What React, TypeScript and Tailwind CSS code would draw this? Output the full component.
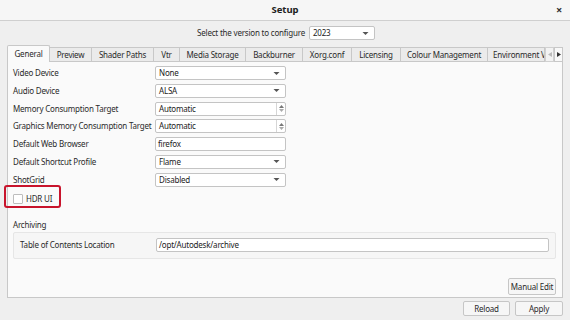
import React from "react";

const Arrow = () => (
  <svg width="7" height="5" viewBox="0 0 7 5" className="shrink-0">
    <path d="M0.5 1 L6.5 1 L3.5 4 Z" fill="#555" />
  </svg>
);

const Combo = ({ value, w = "w-[131px]" }: { value: string; w?: string }) => (
  <div className={`${w} h-[14px] flex items-center justify-between pl-[3px] pr-[5px] bg-white border border-[#c4c4c4] rounded-[2px] text-[#222]`}>
    <span>{value}</span>
    <Arrow />
  </div>
);

const Spin = ({ value }: { value: string }) => (
  <div className="w-[131px] h-[14px] flex items-stretch bg-white border border-[#c4c4c4] rounded-[2px] text-[#222]">
    <span className="flex-1 pl-[3px] flex items-center">{value}</span>
    <div className="w-[9px] border-l border-[#d6d6d6] flex flex-col items-center justify-center gap-[1px]">
      <svg width="5" height="3" viewBox="0 0 5 3"><path d="M0 3 L5 3 L2.5 0 Z" fill="#777" /></svg>
      <svg width="5" height="3" viewBox="0 0 5 3"><path d="M0 0 L5 0 L2.5 3 Z" fill="#aaa" /></svg>
    </div>
  </div>
);

const Edit = ({ value, w = "w-[131px]" }: { value: string; w?: string }) => (
  <div className={`${w} h-[14px] flex items-center pl-[2px] bg-white border border-[#c4c4c4] rounded-[2px] text-[#222]`}>
    {value}
  </div>
);

const tabs: [string, string][] = [
  ["General", "w-[43px]"],
  ["Preview", "w-[42px]"],
  ["Shader Paths", "w-[62px]"],
  ["Vtr", "w-[26px]"],
  ["Media Storage", "w-[66px]"],
  ["Backburner", "w-[57px]"],
  ["Xorg.conf", "w-[49px]"],
  ["Licensing", "w-[49px]"],
  ["Colour Management", "w-[87px]"],
];

export default function App() {
  const rows: [string, React.ReactNode][] = [
    ["Video Device", <Combo value="None" />],
    ["Audio Device", <Combo value="ALSA" />],
    ["Memory Consumption Target", <Spin value="Automatic" />],
    ["Graphics Memory Consumption Target", <Spin value="Automatic" />],
    ["Default Web Browser", <Edit value="firefox" />],
    ["Default Shortcut Profile", <Combo value="Flame" />],
    ["ShotGrid", <Combo value="Disabled" />],
  ];
  return (
    <div className="w-[570px] h-[320px] bg-[#efefef] flex flex-col text-[8px] tracking-[-0.2px] text-[#2a2a2a] leading-none relative overflow-hidden whitespace-nowrap" style={{ fontFamily: "'Noto Sans', 'Open Sans', sans-serif" }}>
      {/* title bar */}
      <div className="h-[21px] bg-[#f6f6f6] border-b border-[#cfcfcf] flex items-center justify-center relative shrink-0">
        <span className="font-bold text-[9.5px] tracking-normal text-[#222]">Setup</span>
        <span className="absolute right-[8px] top-[4px] text-[11px] font-bold text-[#333]">×</span>
      </div>
      {/* version row */}
      <div className="h-[24px] flex items-center justify-center gap-[4px] shrink-0 pl-[2px]">
        <span>Select the version to configure</span>
        <Combo value="2023" w="w-[66px]" />
      </div>
      {/* tabs */}
      <div className="h-[17px] flex items-end px-[7px] shrink-0 relative z-10">
        {tabs.map(([t, w], i) =>
          i === 0 ? (
            <div key={t} className={`${w} h-[17px] bg-[#fafafa] border border-b-0 border-[#c8c8c8] rounded-t-[2px] flex items-center justify-center`}>{t}</div>
          ) : (
            <div key={t} className={`${w} h-[15px] bg-[#ebebeb] border border-l-0 border-[#c8c8c8] flex items-center justify-center`}>{t}</div>
          )
        )}
        <div className="w-[57px] h-[15px] bg-[#ebebeb] border border-l-0 border-[#c8c8c8] flex items-center pl-[5px] overflow-hidden">Environment V</div>
        <div className="w-[9px] h-[15px] bg-[#f3f3f3] border border-[#d0d0d0] flex items-center justify-center">
          <svg width="4" height="5" viewBox="0 0 4 5"><path d="M4 0 L4 5 L0 2.5 Z" fill="#bbb" /></svg>
        </div>
        <div className="w-[9px] h-[15px] bg-[#f8f8f8] border border-[#c8c8c8] flex items-center justify-center">
          <svg width="4" height="5" viewBox="0 0 4 5"><path d="M0 0 L0 5 L4 2.5 Z" fill="#333" /></svg>
        </div>
      </div>
      {/* pane */}
      <div className="mx-[7px] h-[237px] -mt-px bg-[#fafafa] border border-[#c8c8c8] flex flex-col pl-[5px] pr-[6px] pt-[4px] shrink-0">
        <div className="flex flex-col gap-[3.8px]">
          {rows.map(([l, c]) => (
            <div key={l} className="flex items-center">
              <span className="w-[142px]">{l}</span>
              {c}
            </div>
          ))}
        </div>
        <div className="mt-[7px] h-[10px] flex items-center gap-[3px]">
          <div className="w-[10px] h-[10px] bg-white border border-[#bdbdbd] rounded-[1px]" />
          <span>HDR UI</span>
        </div>
        <div className="mt-[17px]">Archiving</div>
        <div className="mt-[3px] h-[27px] bg-[#f6f6f6] border border-[#e6e6e6] rounded-[2px] flex items-center pl-[6px] pr-[6px]">
          <span className="w-[136px]">Table of Contents Location</span>
          <Edit value="/opt/Autodesk/archive" w="flex-1" />
        </div>
        <div className="flex-1" />
        <div className="flex justify-end mb-[2px]">
          <div className="w-[48px] h-[17px] bg-[#f6f6f6] border border-[#c6c6c6] rounded-[2px] flex items-center justify-center">Manual Edit</div>
        </div>
      </div>
      {/* bottom buttons */}
      <div className="flex justify-end gap-[5px] pr-[7px] pt-[3px]">
        <div className="w-[47px] h-[15px] bg-[#f6f6f6] border border-[#c6c6c6] rounded-[2px] flex items-center justify-center">Reload</div>
        <div className="w-[48px] h-[15px] bg-[#f6f6f6] border border-[#c6c6c6] rounded-[2px] flex items-center justify-center">Apply</div>
      </div>
      {/* annotation highlight */}
      <div className="absolute left-[4px] top-[185px] w-[57px] h-[23px] border-2 border-[#c8142c] rounded-[3px]" />
    </div>
  );
}
